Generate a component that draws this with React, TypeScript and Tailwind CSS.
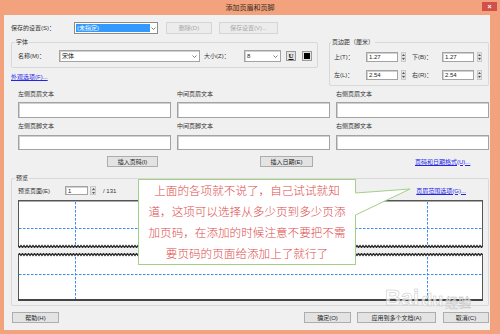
import React from "react";

const Btn = ({
  className = "",
  disabled = false,
  children,
}: {
  className?: string;
  disabled?: boolean;
  children: React.ReactNode;
}) => (
  <div
    className={`flex h-[11px] items-center justify-center border text-[6px] leading-none ${
      disabled
        ? "border-[#d5d5d5] bg-[#ececec] text-[#a9a9a9]"
        : "border-[#adadad] bg-[#e3e3e3] text-[#262626]"
    } ${className}`}
  >
    {children}
  </div>
);

const Chevron = () => (
  <svg width="5" height="3" viewBox="0 0 5 3" className="shrink-0">
    <path d="M0.5 0.5 L2.5 2.5 L4.5 0.5" fill="none" stroke="#606060" strokeWidth="0.8" />
  </svg>
);

const Spin = ({ className = "" }: { className?: string }) => (
  <div className={`flex flex-col border border-[#c9c9c9] bg-[#e6e6e6] ${className}`}>
    <div className="flex flex-1 items-center justify-center border-b border-[#d4d4d4]">
      <svg width="3" height="2" viewBox="0 0 3 2">
        <path d="M0 2 L1.5 0 L3 2Z" fill="#555" />
      </svg>
    </div>
    <div className="flex flex-1 items-center justify-center">
      <svg width="3" height="2" viewBox="0 0 3 2">
        <path d="M0 0 L1.5 2 L3 0Z" fill="#555" />
      </svg>
    </div>
  </div>
);

const Field = ({ className = "", children }: { className?: string; children?: React.ReactNode }) => (
  <div
    className={`flex items-center border border-[#a3a3a3] bg-white pl-[2px] text-[6px] leading-none text-[#222] shadow-[inset_1px_1px_0_#d0d0d0] ${className}`}
  >
    {children}
  </div>
);

const Group = ({
  label,
  labelClass,
  className = "",
  children,
}: {
  label: string;
  labelClass: string;
  className?: string;
  children: React.ReactNode;
}) => (
  <div className={`relative rounded-[2px] border border-[#d8d8d8] ${className}`}>
    <span
      className={`absolute -top-[4px] bg-[#f0f0f0] px-[1px] text-[6px] leading-[7px] text-[#333] ${labelClass}`}
    >
      {label}
    </span>
    {children}
  </div>
);

const wave = (w: number, y0: number, dir: number) => {
  let d = `M0 ${y0}`;
  for (let x = 0; x < w; x += 3) d += ` L${x + 1.5} ${y0 + dir * 2} L${x + 3} ${y0}`;
  return d;
};

const DASH = "2.5 1.5";
const BLUE = "#3b8df0";

const PreviewTop = () => (
  <svg width="465" height="48" viewBox="0 0 465 48" className="block">
    <rect x="0" y="0" width="465" height="46" fill="#fff" />
    <line x1="0" y1="0.7" x2="465" y2="0.7" stroke="#555" strokeWidth="1.4" />
    <line x1="0.5" y1="0" x2="0.5" y2="46" stroke="#555" />
    <line x1="464.5" y1="0" x2="464.5" y2="46" stroke="#555" />
    <line x1="57.5" y1="2" x2="57.5" y2="45" stroke={BLUE} strokeDasharray={DASH} />
    <line x1="409.5" y1="2" x2="409.5" y2="45" stroke={BLUE} strokeDasharray={DASH} />
    <line x1="1" y1="28.5" x2="464" y2="28.5" stroke={BLUE} strokeDasharray={DASH} />
    <path d={wave(465, 45.5, 1)} fill="none" stroke="#2a2a2a" strokeWidth="1.3" />
  </svg>
);

const PreviewBottom = () => (
  <svg width="465" height="48" viewBox="0 0 465 48" className="block">
    <rect x="0" y="2" width="465" height="45" fill="#fff" />
    <path d={wave(465, 2.5, -1)} fill="none" stroke="#2a2a2a" strokeWidth="1.3" />
    <line x1="0.5" y1="2" x2="0.5" y2="48" stroke="#555" />
    <line x1="464.5" y1="2" x2="464.5" y2="48" stroke="#555" />
    <line x1="0" y1="47" x2="465" y2="47" stroke="#444" strokeWidth="2" />
    <line x1="57.5" y1="4" x2="57.5" y2="46" stroke={BLUE} strokeDasharray={DASH} />
    <line x1="409.5" y1="4" x2="409.5" y2="46" stroke={BLUE} strokeDasharray={DASH} />
    <line x1="1" y1="21.5" x2="464" y2="21.5" stroke={BLUE} strokeDasharray={DASH} />
  </svg>
);

const Link = ({ children, className = "" }: { children: React.ReactNode; className?: string }) => (
  <span className={`text-[6px] leading-[8px] text-[#2424e8] underline ${className}`}>{children}</span>
);

const Label = ({ children, className = "" }: { children: React.ReactNode; className?: string }) => (
  <span className={`shrink-0 text-[6px] leading-none text-[#333] ${className}`}>{children}</span>
);

export default function App() {
  return (
    <div className="relative flex h-[334px] w-[500px] flex-col overflow-hidden bg-[#f2a27c] pb-[4px] font-['Liberation_Sans','Noto_Sans_CJK_SC',sans-serif]">
      {/* title bar */}
      <div className="relative flex h-[15px] shrink-0 items-center justify-center">
        <span className="text-[7px] leading-none text-[#3a2a22]">添加页眉和页脚</span>
        <div className="absolute right-[3px] top-[2px] flex h-[9px] w-[15px] items-center justify-center bg-[#d2504a] text-[7px] font-bold leading-none text-white">
          ×
        </div>
      </div>

      <div className="ml-[4px] mr-[10px] flex flex-1 flex-col bg-[#f0f0f0] pl-[7px] pr-[1px]">
        {/* saved settings */}
        <div className="mt-[7px] flex h-[12px] items-center">
          <Label className="w-[63px]">保存的设置(S)：</Label>
          <div className="flex h-[12px] w-[84px] items-center border border-[#8c8c8c] bg-white p-[1px]">
            <div className="flex h-full flex-1 items-center bg-[#3399ff] pl-[1px] text-[6px] leading-none text-white">
              (未指定)
            </div>
            <div className="flex w-[6px] justify-center">
              <Chevron />
            </div>
          </div>
          <Btn disabled className="ml-[8px] h-[12px] w-[46px]">删除(D)</Btn>
          <Btn disabled className="ml-[7px] h-[12px] w-[59px]">保存设置(V)...</Btn>
        </div>

        {/* font + margins */}
        <div className="mt-[8px] flex">
          <div className="flex w-[307px] flex-col">
            <Group label="字体" labelClass="left-[3px]" className="h-[26px]">
              <div className="mt-[7px] flex h-[12px] items-center pl-[6px]">
                <Label className="w-[41px]">名称(M)：</Label>
                <Field className="h-[12px] w-[141px] justify-between pr-[2px]">
                  <span>宋体</span>
                  <Chevron />
                </Field>
                <Label className="ml-[4px] w-[40px]">大小(Z)：</Label>
                <Field className="h-[12px] w-[37px] justify-between pr-[2px]">
                  <span>8</span>
                  <Chevron />
                </Field>
                <div className="ml-[5px] flex h-[10px] w-[10px] items-center justify-center border border-[#9a9a9a] bg-[#e3e3e3] font-['Liberation_Serif',serif] text-[7px] font-bold leading-none text-[#111] underline">
                  U
                </div>
                <div className="ml-[6px] flex h-[10px] w-[10px] items-center justify-center border border-[#9a9a9a] bg-[#e3e3e3]">
                  <div className="h-[6px] w-[6px] bg-black" />
                </div>
              </div>
            </Group>
            <Link className="mt-[5px]">外观选项(F)...</Link>
          </div>

          <div className="ml-[11px] w-[160px]">
            <Group label="页边距（厘米）" labelClass="left-[1px]" className="h-[44px]">
              <div className="mt-[9px] flex h-[10px] items-center pl-[4px]">
                <Label className="w-[32px]">上(T)：</Label>
                <Field className="h-[10px] w-[32px]">1.27</Field>
                <Spin className="ml-[3px] h-[10px] w-[5px]" />
                <Label className="ml-[6px] w-[30px]">下(B)：</Label>
                <Field className="h-[10px] w-[32px]">1.27</Field>
                <Spin className="ml-[3px] h-[10px] w-[5px]" />
              </div>
              <div className="mt-[8px] flex h-[10px] items-center pl-[4px]">
                <Label className="w-[32px]">左(L)：</Label>
                <Field className="h-[10px] w-[32px]">2.54</Field>
                <Spin className="ml-[3px] h-[10px] w-[5px]" />
                <Label className="ml-[6px] w-[30px]">右(R)：</Label>
                <Field className="h-[10px] w-[32px]">2.54</Field>
                <Spin className="ml-[3px] h-[10px] w-[5px]" />
              </div>
            </Group>
          </div>
        </div>

        {/* header / footer text */}
        <div className="ml-[7px] mt-[5px] grid grid-cols-[153px_153px_153px] gap-x-[6px]">
          <Label className="h-[7px]">左侧页眉文本</Label>
          <Label className="h-[7px]">中间页眉文本</Label>
          <Label className="h-[7px]">右侧页眉文本</Label>
          <Field className="mt-[4px] h-[16px]" />
          <Field className="mt-[4px] h-[16px]" />
          <Field className="mt-[4px] h-[16px]" />
          <Label className="mt-[5px] h-[7px]">左侧页脚文本</Label>
          <Label className="mt-[5px] h-[7px]">中间页脚文本</Label>
          <Label className="mt-[5px] h-[7px]">右侧页脚文本</Label>
          <Field className="mt-[5px] h-[15px]" />
          <Field className="mt-[5px] h-[15px]" />
          <Field className="mt-[5px] h-[15px]" />
        </div>

        <div className="mt-[6px] flex h-[11px] items-center">
          <Btn className="ml-[96px] w-[51px]">插入页码(I)</Btn>
          <Btn className="ml-[102px] w-[53px]">插入日期(E)</Btn>
          <Link className="ml-[102px]">页码和日期格式(U)...</Link>
        </div>

        {/* preview */}
        <Group label="预览" labelClass="left-[3px]" className="mt-[11px] h-[128px]">
          <div className="flex flex-col pl-[6px]">
            <div className="mt-[7px] flex h-[9px] items-center">
              <Label className="w-[47px]">预览页面(E)</Label>
              <Field className="h-[9px] w-[23px]">1</Field>
              <Spin className="ml-[2px] h-[9px] w-[6px]" />
              <Label className="ml-[7px]">/ 131</Label>
              <Link className="ml-auto mr-[22px]">页眉范围选项(G)...</Link>
            </div>
            <div className="mt-[5px]">
              <PreviewTop />
            </div>
            <div className="mt-[5px]">
              <PreviewBottom />
            </div>
          </div>
        </Group>

        {/* dialog buttons */}
        <div className="mt-[6px] flex h-[11px] items-center">
          <Btn className="ml-[1px] w-[47px]">帮助(H)</Btn>
          <Btn className="ml-auto w-[47px]">确定(O)</Btn>
          <Btn className="ml-[6px] w-[79px]">应用到多个文档(A)</Btn>
          <Btn className="ml-[7px] w-[46px]">取消(C)</Btn>
        </div>
      </div>

      {/* annotation callout */}
      <div className="absolute left-[138px] top-[179px] h-[86px] w-[218px] border border-[#a3cf86] bg-white text-center text-[11.6px] font-light leading-[21px] text-[#dc4b4b]">
        上面的各项就不说了，自己试试就知
        <br />
        道，这项可以选择从多少页到多少页添
        <br />
        加页码，在添加的时候注意不要把不需
        <br />
        要页码的页面给添加上了就行了
      </div>
      <svg className="absolute left-[355px] top-[186px]" width="60" height="32" viewBox="0 0 60 32">
        <path d="M0 7 L55 3 L0 29 Z" fill="#fff" />
        <path d="M0.5 7 L55 3 L0.5 29" fill="none" stroke="#a3cf86" strokeWidth="1" />
      </svg>

      {/* watermark */}
      <div className="pointer-events-none absolute left-[385px] top-[287px] flex items-end gap-[2px] text-white/70 [-webkit-text-stroke:0.5px_#c4c4c4]">
        <span className="text-[22px] font-bold leading-none">Bai</span>
        <span className="text-[18px] font-bold leading-none">du</span>
        <span className="text-[13px] leading-none">经验</span>
      </div>
    </div>
  );
}
